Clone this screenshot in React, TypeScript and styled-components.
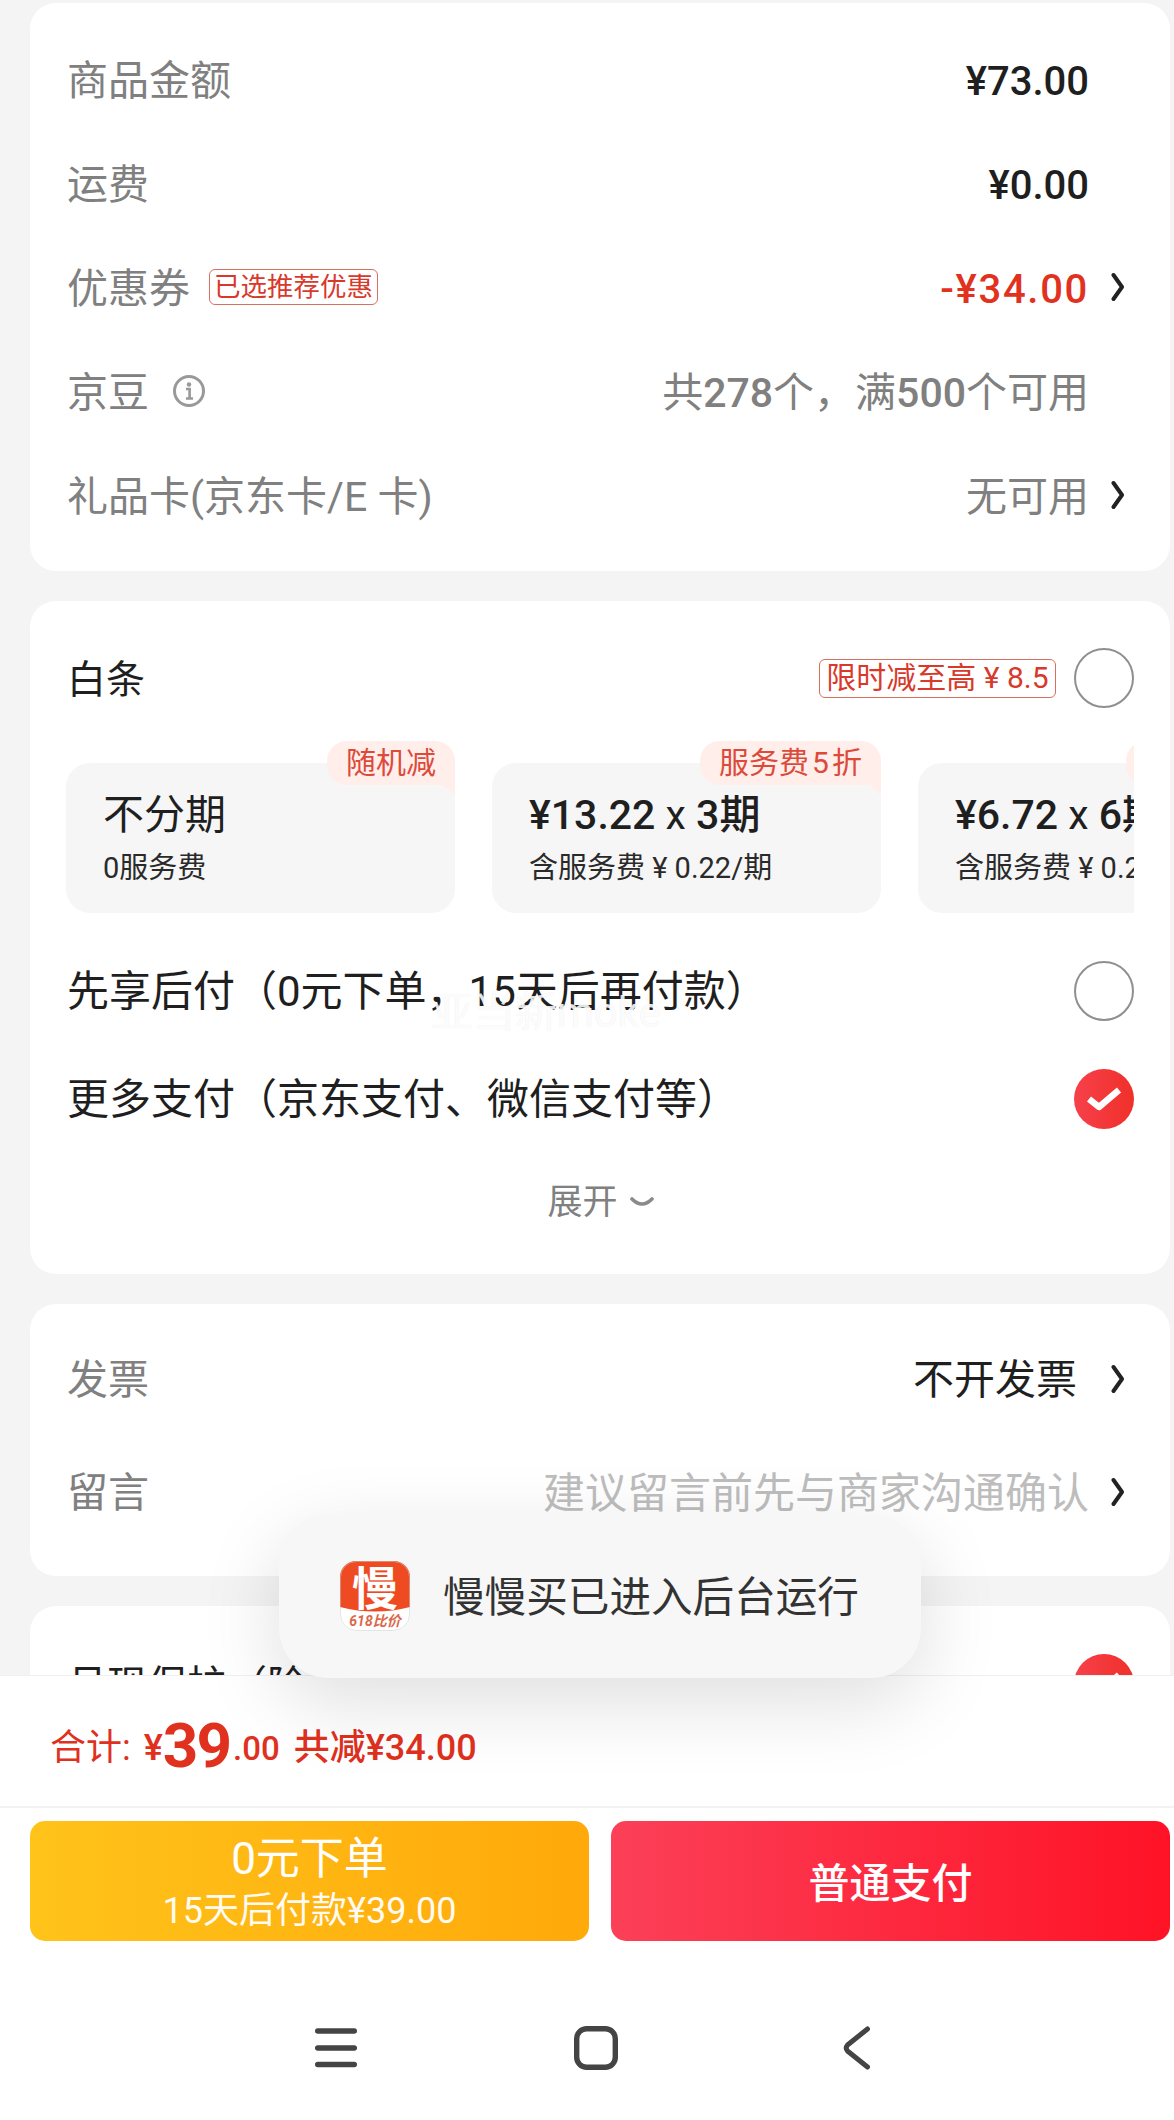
import React from 'react';
import styled, { createGlobalStyle } from 'styled-components';

const GlobalStyle = createGlobalStyle`
  html, body {
    margin: 0;
    padding: 0;
    background: #f4f4f4;
  }
  * {
    box-sizing: border-box;
  }
`;

const FONT = `Roboto, "Noto Sans CJK SC", sans-serif`;

// Page shell
const Screen = styled.div`
  position: relative;
  width: 1174px;
  height: 2120px;
  display: flex;
  flex-direction: column;
  overflow: hidden;
  background: #f4f4f4;
  font-family: ${FONT};
  line-height: 1.2;
  color: #1f1f1f;
`;

const Scroll = styled.div`
  height: 1675px;
  flex: none;
  overflow: hidden;
  padding: 3px 4px 0 30px;
  display: flex;
  flex-direction: column;
  gap: 30px;
`;

const Card = styled.section<{ $h: number; $pad?: string }>`
  flex: none;
  height: ${(p) => p.$h}px;
  padding: ${(p) => p.$pad || '24px 37px 0'};
  background: #fff;
  border-radius: 26px;
`;

// Fee rows
const Row = styled.div<{ $h?: number }>`
  height: ${(p) => p.$h || 104}px;
  display: flex;
  align-items: center;
`;

const Label = styled.span`
  padding-top: 5px;
  font-size: 41px;
  color: #808080;
`;

const Spacer = styled.div`
  flex: 1;
`;

const Value = styled.span<{ $color?: string; $weight?: number; $size?: number; $track?: number }>`
  padding-top: 5px;
  font-size: ${(p) => p.$size || 41}px;
  font-weight: ${(p) => p.$weight || 400};
  letter-spacing: ${(p) => p.$track || 0}px;
  color: ${(p) => p.$color || '#1f1f1f'};
  white-space: nowrap;
  b {
    font-weight: 500;
  }
`;

const ChevronSlot = styled.span<{ $w?: number }>`
  width: ${(p) => p.$w || 44}px;
  flex: none;
  display: flex;
  justify-content: flex-end;
  padding-right: 8px;
`;

const Tag = styled.span<{ $size: number; $w: number; $h: number }>`
  width: ${(p) => p.$w}px;
  height: ${(p) => p.$h}px;
  flex: none;
  display: flex;
  align-items: center;
  justify-content: center;
  border: 1px solid #d9705f;
  border-radius: 6px;
  font-size: ${(p) => p.$size}px;
  color: #d8392a;
  white-space: nowrap;
  line-height: 1;
`;

const CouponTag = styled(Tag)`
  margin-left: 19px;
`;

const InfoIcon = styled.svg`
  margin-left: 23px;
`;

// Payment card
const BaitiaoHead = styled(Row)`
  height: 118px;
  gap: 18px;
`;

const PayTitle = styled.span`
  padding-top: 5px;
  font-size: 39px;
  color: #1f1f1f;
`;

const PlanScroller = styled.div`
  margin: 4px 0 24px -1px;
  padding-top: 22px;
  height: 172px;
  display: flex;
  gap: 37px;
  overflow: hidden;
`;

const Plan = styled.div`
  position: relative;
  flex: none;
  width: 389px;
  height: 150px;
  padding: 25px 37px 0;
  background: #f6f6f6;
  border-radius: 24px;
`;

const PlanTitle = styled.div`
  font-size: 41px;
  line-height: 54px;
  font-weight: 500;
  white-space: nowrap;
  em {
    font-style: normal;
    font-weight: 400;
  }
`;

const PlanSub = styled.div`
  margin-top: 7px;
  font-size: 29px;
  line-height: 38px;
  color: #2a2a2a;
  white-space: nowrap;
`;

const PlanBadge = styled.span`
  position: absolute;
  top: -22px;
  right: 0;
  height: 44px;
  padding: 0 19px;
  display: flex;
  align-items: center;
  font-size: 30px;
  color: #dc4a3a;
  background: #ffeeea;
  border-radius: 20px 20px 0 20px;
  white-space: nowrap;

  &::after {
    content: '';
    position: absolute;
    top: 100%;
    right: 0;
    width: 12px;
    height: 10px;
    background: #ffeeea;
    clip-path: polygon(0 0, 100% 0, 100% 100%);
  }
`;

const PayRow = styled(Row)`
  height: 108px;
`;

const PayLabel = styled.span<{ $size?: number }>`
  padding-top: 3px;
  font-size: ${(p) => p.$size || 42}px;
  color: #1f1f1f;
  white-space: nowrap;
`;

const Radio = styled.span`
  width: 60px;
  height: 60px;
  flex: none;
  border: 2px solid #8f8f8f;
  border-radius: 50%;
`;

const CheckedRadio = styled.span`
  width: 60px;
  height: 60px;
  flex: none;
  display: flex;
  align-items: center;
  justify-content: center;
  border-radius: 50%;
  background: linear-gradient(90deg, #f6404a, #f0302a);
`;

const Expand = styled.div`
  height: 96px;
  padding-top: 4px;
  display: flex;
  align-items: center;
  justify-content: center;
  gap: 12px;
  font-size: 35px;
  color: #808080;
`;

const Watermark = styled.div`
  position: absolute;
  left: 431px;
  top: 989px;
  font-size: 42px;
  line-height: 48px;
  color: rgba(255, 255, 255, 0.9);
  text-shadow: 0 0 1px rgba(0, 0, 0, 0.1);
  white-space: nowrap;
`;

// Bottom bar
const Footer = styled.footer`
  flex: 1;
  position: relative;
  background: #fff;
  border-top: 1px solid #f0f0f0;
  display: flex;
  flex-direction: column;
`;

const Summary = styled.div`
  height: 132px;
  flex: none;
  padding: 16px 0 0 50px;
  display: flex;
  align-items: center;
  color: #e0301e;
  font-size: 36px;
  border-bottom: 2px solid #f2f2f2;
  white-space: nowrap;
`;

const Yen = styled.span`
  margin-left: 13px;
  font-size: 36px;
  font-weight: 500;
`;

const Big = styled.span`
  font-size: 62px;
  font-weight: 700;
  letter-spacing: -2px;
  line-height: 1;
  margin-bottom: 7px;
`;

const Cents = styled.span`
  margin-left: 3px;
  font-size: 33px;
  font-weight: 500;
`;

const Saved = styled.span`
  margin-left: 14px;
  font-size: 36px;
  font-weight: 500;
`;

const Buttons = styled.div`
  margin-top: 13px;
  padding: 0 4px 0 30px;
  display: flex;
  gap: 22px;
`;

const PayButton = styled.button<{ $bg: string }>`
  flex: 1;
  height: 120px;
  padding: 5px 0 0;
  border: none;
  border-radius: 15px;
  display: flex;
  flex-direction: column;
  align-items: center;
  justify-content: center;
  color: #fff;
  font-family: ${FONT};
  background: ${(p) => p.$bg};
`;

const ButtonMain = styled.span<{ $size: number; $weight: number }>`
  font-size: ${(p) => p.$size}px;
  font-weight: ${(p) => p.$weight};
  line-height: 54px;
`;

const ButtonSub = styled.span`
  font-size: 36px;
  line-height: 50px;
  opacity: 0.95;
`;

const NavBar = styled.nav`
  margin-top: 85px;
  padding-left: 315px;
  display: flex;
  align-items: center;
  gap: 217px;

  svg:last-child {
    margin-left: 8px;
  }
`;

// Toast
const Toast = styled.div`
  position: absolute;
  left: 279px;
  top: 1514px;
  width: 642px;
  height: 164px;
  padding-left: 61px;
  display: flex;
  align-items: center;
  gap: 33px;
  background: #f7f7f7;
  border-radius: 50px;
  box-shadow: 0 24px 80px rgba(0, 0, 0, 0.13);
`;

const ToastText = styled.span`
  padding-top: 3px;
  font-size: 41.6px;
  color: #333;
  white-space: nowrap;
`;

const LogoWord = styled.text`
  font-family: ${FONT};
`;

const Chevron = () => (
  <svg width="14" height="30" viewBox="0 0 14 30" fill="none">
    <path d="M2.5 3 L11 15 L2.5 27" stroke="#222" strokeWidth="4" strokeLinecap="round" strokeLinejoin="round" />
  </svg>
);

const CheckMark = () => (
  <svg width="36" height="28" viewBox="0 0 36 28" fill="none">
    <path d="M3 14 L13 22 L33 5" stroke="#fff" strokeWidth="6.5" strokeLinejoin="round" />
  </svg>
);

const AppLogo = () => (
  <svg width="70" height="70" viewBox="0 0 70 70">
    <defs>
      <clipPath id="logoClip">
        <rect width="70" height="70" rx="16" />
      </clipPath>
    </defs>
    <g clipPath="url(#logoClip)">
      <rect width="70" height="70" fill="#fff" />
      <path d="M0 0H70V46Q35 55 0 46Z" fill="#ee4b23" />
      <LogoWord x="35" y="44" fontSize="46" fontWeight="700" fill="#fff" textAnchor="middle">慢</LogoWord>
      <LogoWord x="35" y="65" fontSize="14" fontWeight="700" fontStyle="italic" fill="#d9694c" textAnchor="middle">618比价</LogoWord>
    </g>
    <rect x=".5" y=".5" width="69" height="69" rx="16" fill="none" stroke="#ccc" strokeOpacity=".5" />
  </svg>
);

export default function App() {
  return (
    <Screen>
      <GlobalStyle />
      <Scroll>
        <Card $h={568}>
          <Row>
            <Label>商品金额</Label>
            <Spacer />
            <Value $size={40} $weight={500}>¥73.00</Value>
            <ChevronSlot />
          </Row>
          <Row>
            <Label>运费</Label>
            <Spacer />
            <Value $size={40} $weight={500}>¥0.00</Value>
            <ChevronSlot />
          </Row>
          <Row>
            <Label>优惠券</Label>
            <CouponTag $size={26.5} $w={169} $h={36}>已选推荐优惠</CouponTag>
            <Spacer />
            <Value $size={40} $weight={500} $track={1.7} $color="#e0321e">-¥34.00</Value>
            <ChevronSlot>
              <Chevron />
            </ChevronSlot>
          </Row>
          <Row>
            <Label>京豆</Label>
            <InfoIcon width="34" height="34" viewBox="0 0 34 34" fill="none">
              <circle cx="17" cy="17" r="14.5" stroke="#999" strokeWidth="3" />
              <circle cx="17" cy="10.5" r="2.2" fill="#999" />
              <path d="M14 15h3.6v9M14 24.5h7" stroke="#999" strokeWidth="2.6" />
            </InfoIcon>
            <Spacer />
            <Value $color="#808080">共<b>278</b>个，满<b>500</b>个可用</Value>
            <ChevronSlot />
          </Row>
          <Row>
            <Label>礼品卡(京东卡/E 卡)</Label>
            <Spacer />
            <Value $color="#808080">无可用</Value>
            <ChevronSlot>
              <Chevron />
            </ChevronSlot>
          </Row>
        </Card>

        <Card $h={673} $pad="18px 36px 0 37px">
          <BaitiaoHead>
            <PayTitle>白条</PayTitle>
            <Spacer />
            <Tag $size={30} $w={237} $h={39}>限时减至高 ¥ 8.5</Tag>
            <Radio />
          </BaitiaoHead>
          <PlanScroller>
            <Plan>
              <PlanBadge>随机减</PlanBadge>
              <PlanTitle><em>不分期</em></PlanTitle>
              <PlanSub>0服务费</PlanSub>
            </Plan>
            <Plan>
              <PlanBadge>服务费{'\u200A'}5{'\u200A'}折</PlanBadge>
              <PlanTitle>¥13.22 <em>x</em> 3期</PlanTitle>
              <PlanSub>含服务费 ¥ 0.22/期</PlanSub>
            </Plan>
            <Plan>
              <PlanBadge>服务费{'\u200A'}5{'\u200A'}折</PlanBadge>
              <PlanTitle>¥6.72 <em>x</em> 6期</PlanTitle>
              <PlanSub>含服务费 ¥ 0.22/期</PlanSub>
            </Plan>
          </PlanScroller>
          <PayRow>
            <PayLabel>先享后付（0元下单，15天后再付款）</PayLabel>
            <Spacer />
            <Radio />
          </PayRow>
          <PayRow>
            <PayLabel>更多支付（京东支付、微信支付等）</PayLabel>
            <Spacer />
            <CheckedRadio>
              <CheckMark />
            </CheckedRadio>
          </PayRow>
          <Expand>
            展开
            <svg width="24" height="14" viewBox="0 0 24 14" fill="none">
              <path d="M2 3 Q12 13 22 3" stroke="#8a8a8a" strokeWidth="3.6" strokeLinecap="round" />
            </svg>
          </Expand>
        </Card>

        <Card $h={272} $pad="18px 37px 0">
          <Row $h={113}>
            <Label>发票</Label>
            <Spacer />
            <Value>不开发票</Value>
            <ChevronSlot $w={56}>
              <Chevron />
            </ChevronSlot>
          </Row>
          <Row $h={113}>
            <Label>留言</Label>
            <Spacer />
            <Value $size={42} $color="#bdbdbd">建议留言前先与商家沟通确认</Value>
            <ChevronSlot>
              <Chevron />
            </ChevronSlot>
          </Row>
        </Card>

        <Card $h={300} $pad="24px 36px 0 37px">
          <PayRow>
            <PayLabel $size={40}>月现保护（险</PayLabel>
            <Spacer />
            <CheckedRadio>
              <CheckMark />
            </CheckedRadio>
          </PayRow>
        </Card>
      </Scroll>

      <Footer>
        <Summary>
          合计:
          <Yen>¥</Yen>
          <Big>39</Big>
          <Cents>.00</Cents>
          <Saved>共减¥34.00</Saved>
        </Summary>
        <Buttons>
          <PayButton $bg="linear-gradient(90deg, #ffc31a, #ffa90a)">
            <ButtonMain $size={44} $weight={400}>0元下单</ButtonMain>
            <ButtonSub>15天后付款¥39.00</ButtonSub>
          </PayButton>
          <PayButton $bg="linear-gradient(90deg, #fb4058, #ff1226)">
            <ButtonMain $size={41} $weight={500}>普通支付</ButtonMain>
          </PayButton>
        </Buttons>
        <NavBar>
          <svg width="42" height="44" viewBox="0 0 42 44" fill="none">
            <path d="M2.75 5H39.25M2.75 22H39.25M2.75 38.5H39.25" stroke="#444" strokeWidth="5.5" strokeLinecap="round" />
          </svg>
          <svg width="44" height="44" viewBox="0 0 44 44" fill="none">
            <rect x="2.7" y="2.7" width="38.6" height="38.6" rx="10" stroke="#444" strokeWidth="5.4" />
          </svg>
          <svg width="27" height="44" viewBox="0 0 27 44" fill="none">
            <path d="M24.5 3 L4.5 19 Q2 22 4.5 25 L24.5 41" stroke="#444" strokeWidth="5" strokeLinecap="round" strokeLinejoin="round" />
          </svg>
        </NavBar>
      </Footer>

      <Watermark>亚当新moke</Watermark>

      <Toast>
        <AppLogo />
        <ToastText>慢慢买已进入后台运行</ToastText>
      </Toast>
    </Screen>
  );
}
